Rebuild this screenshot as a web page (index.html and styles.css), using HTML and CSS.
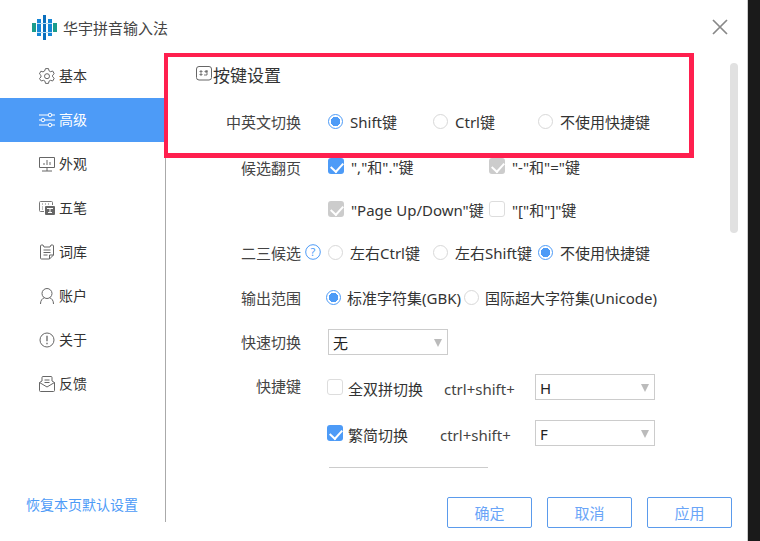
FILE: index.html
```html
<!DOCTYPE html>
<html lang="zh-CN">
<head>
<meta charset="utf-8">
<title>华宇拼音输入法</title>
<link rel="stylesheet" href="styles.css">
</head>
<body>
<div class="screen">
  <div class="window">
    <header class="titlebar">
      <svg class="logo" viewBox="0 0 25 25" width="25" height="25">
        <rect x="0" y="8" width="4" height="9" fill="#1a9c8c"/>
        <rect x="5" y="4" width="4" height="17" fill="#1586d6"/>
        <rect x="11" y="0" width="3" height="25" fill="#0a6fbd"/>
        <rect x="16" y="4" width="4" height="17" fill="#1586d6"/>
        <rect x="21" y="8" width="4" height="9" fill="#1a9c8c"/>
        <rect x="5" y="8" width="15" height="1" fill="#b8dcf2"/>
        <rect x="5" y="17" width="15" height="1" fill="#b8dcf2"/>
      </svg>
      <span class="app-name">华宇拼音输入法</span>
      <svg class="close" viewBox="0 0 16 16" width="16" height="16"><path d="M1 1 15 15M15 1 1 15" stroke="#888" stroke-width="1.7" fill="none"/></svg>
    </header>
    <div class="body">
      <aside class="sidebar">
        <nav class="menu">
          <a class="item"><svg class="ic" viewBox="0 0 16 16"><path d="M6.500 .6h3l.5 2.200 1.600.9 2.100-.7 1.500 2.700-1.600 1.500v1.600l1.600 1.500-1.500 2.700-2.100-.7-1.600.9-.5 2.200h-3l-.5-2.200-1.600-.9-2.100.7L.4 10.500 2 9V7.400L.4 5.900l1.500-2.700 2.100.7 1.600-.9z" fill="none" stroke="#666" stroke-width="1"/><circle cx="8" cy="8.200" r="2.500" fill="none" stroke="#666"/></svg>基本</a>
          <a class="item active"><svg class="ic" viewBox="0 0 16 16"><path d="M0 3h9M13 3h3M0 8h2M6 8h10M0 13h9M13 13h3" stroke="#fff" stroke-width="1" fill="none"/><circle cx="11" cy="3" r="1.800" fill="none" stroke="#fff"/><circle cx="4" cy="8" r="1.800" fill="none" stroke="#fff"/><circle cx="11" cy="13" r="1.800" fill="none" stroke="#fff"/></svg>高级</a>
          <a class="item"><svg class="ic" viewBox="0 0 16 16"><path d="M.5 1.500h15v10H.5zM3 15h10M8 11.500V15M5 9V7M8 9V4M11 9V6" fill="none" stroke="#666"/></svg>外观</a>
          <a class="item"><svg class="ic" viewBox="0 0 16 16"><path d="M5 11.500H1.500a1 1 0 0 1-1-1v-8a1 1 0 0 1 1-1h11a1 1 0 0 1 1 1V5" fill="none" stroke="#777"/><path d="M3 4h1M6 4h1M9 4h1M3 7h1M3 9h1" stroke="#777"/><rect x="6" y="6" width="10" height="9" rx="1" fill="#666"/><path d="M8 8.500h6M9 12.500h4M11 8.500v4" stroke="#fff"/></svg>五笔</a>
          <a class="item"><svg class="ic" viewBox="0 0 16 16"><path d="M4 1H2.500a1 1 0 0 0-1 1v12a1 1 0 0 0 1 1h8l4-4V2a1 1 0 0 0-1-1H12M4 1l1 2h6l1-2M10.500 15v-4h4M4.500 6h7M4.500 8.500h7M4.500 11h4" fill="none" stroke="#666"/></svg>词库</a>
          <a class="item"><svg class="ic" viewBox="0 0 16 16"><circle cx="8" cy="5.500" r="5" fill="none" stroke="#666"/><path d="M1.500 16c0-3.500 1.700-5.500 3.700-6.200M14.500 16c0-3.500-1.700-5.500-3.700-6.200" fill="none" stroke="#666"/></svg>账户</a>
          <a class="item"><svg class="ic" viewBox="0 0 16 16"><circle cx="8" cy="8" r="7" fill="none" stroke="#666"/><path d="M8 3.800v5.500M8 10.800v1.500" stroke="#666" stroke-width="1.300"/></svg>关于</a>
          <a class="item"><svg class="ic" viewBox="0 0 16 16"><path d="M.5 6.500v8a1 1 0 0 0 1 1h13a1 1 0 0 0 1-1v-8L13 5V1.500a1 1 0 0 0-1-1H4a1 1 0 0 0-1 1V5zM.5 6.500 8 11l7.500-4.500M5.500 4h5M5.500 6.500h5" fill="none" stroke="#666"/></svg>反馈</a>
        </nav>
        <a class="restore">恢复本页默认设置</a>
      </aside>
      <main class="main">
        <h2 class="section-title"><svg class="key-ic" viewBox="0 0 16 16" width="16" height="16"><rect x=".5" y=".5" width="15" height="13.500" rx="2.500" fill="none" stroke="#666"/><path d="M4 5h2v1H4zM9 5h2v1H9zM4 8h2v1H4zM11 4v5M8 9h3" stroke="#555" stroke-width=".8" fill="none"/></svg>按键设置</h2>

        <div class="row r-switch">
          <span class="label">中英文切换</span>
          <div class="opts grid105">
            <label class="opt"><i class="radio on"></i>Shift键</label>
            <label class="opt"><i class="radio"></i>Ctrl键</label>
            <label class="opt"><i class="radio"></i>不使用快捷键</label>
          </div>
        </div>

        <div class="row r-page">
          <span class="label">候选翻页</span>
          <div class="checks">
            <label class="opt"><i class="check on"></i>","和"."键</label>
            <label class="opt"><i class="check dis"></i>"-"和"="键</label>
            <label class="opt"><i class="check dis"></i>"Page Up/Down"键</label>
            <label class="opt"><i class="check"></i>"["和"]"键</label>
          </div>
        </div>

        <div class="row r-cand">
          <span class="label">二三候选<svg class="help" viewBox="0 0 16 16" width="16" height="16"><circle cx="8" cy="8" r="7.300" fill="none" stroke="#4d9bf7"/><text x="8" y="11.800" text-anchor="middle" class="help-q">?</text></svg></span>
          <div class="opts grid105">
            <label class="opt"><i class="radio"></i>左右Ctrl键</label>
            <label class="opt"><i class="radio"></i>左右Shift键</label>
            <label class="opt"><i class="radio on"></i>不使用快捷键</label>
          </div>
        </div>

        <div class="row r-range">
          <span class="label">输出范围</span>
          <div class="opts shifted">
            <label class="opt tight"><i class="radio on"></i>标准字符集(GBK)</label>
            <label class="opt tight"><i class="radio"></i>国际超大字符集(Unicode)</label>
          </div>
        </div>

        <div class="row r-quick">
          <span class="label">快速切换</span>
          <div class="select">无<b class="caret"></b></div>
        </div>

        <div class="row r-hot">
          <span class="label">快捷键</span>
          <div class="hot">
            <label class="opt w96"><i class="check"></i>全双拼切换</label>
            <span class="combo c1">ctrl+shift+</span>
            <div class="select">H<b class="caret"></b></div>
          </div>
        </div>

        <div class="row r-hot2">
          <span class="label"></span>
          <div class="hot">
            <label class="opt w92"><i class="check on"></i>繁简切换</label>
            <span class="combo c2">ctrl+shift+</span>
            <div class="select">F<b class="caret"></b></div>
          </div>
        </div>

        <hr class="rule">

        <footer class="actions">
          <button class="btn">确定</button>
          <button class="btn">取消</button>
          <button class="btn">应用</button>
        </footer>
        <div class="scrollbar"></div>
      </main>
    </div>
  </div>
  <div class="edge"></div>
  <div class="highlight"></div>
</div>
</body>
</html>
```

FILE: styles.css
```css
* { box-sizing: border-box; }
html, body { margin: 0; padding: 0; }
body {
  width: 760px; height: 541px; overflow: hidden; background: #fff;
  font-family: "Noto Sans", "Noto Sans CJK SC", sans-serif;
  font-size: 15px; line-height: 20px; color: #333;
}
.screen { position: relative; display: flex; width: 760px; height: 541px; }
.window { width: 747px; height: 541px; display: flex; flex-direction: column; background: #fff; }
.edge { width: 13px; background: #1a1a1a; border-left: 1px solid #ccc; }

.titlebar { height: 53px; display: flex; align-items: center; padding: 2px 19px 0 32px; }
.logo { flex: none; margin-right: 6px; margin-top: -1px; }
.app-name { font-size: 15px; color: #444; }
.close { margin-left: auto; margin-top: -2px; }

.body { display: flex; height: 469px; }
.sidebar { width: 166px; flex: none; border-right: 1px solid #aaa; display: flex; flex-direction: column; font-size: 14px; }
.menu { display: flex; flex-direction: column; margin-top: 1px; }
.item { height: 44px; display: flex; align-items: center; padding-left: 39px; color: #333; }
.item.active { background: #4d9bf7; color: #fff; width: 165px; }
.ic { width: 16px; height: 16px; margin-right: 4px; flex: none; }
.restore { margin-top: auto; margin-bottom: 7px; padding-left: 26px; color: #4d9bf7; }

.main { position: relative; flex: 1; display: flex; flex-direction: column; padding-top: 13px; }
.section-title { margin: 0 0 0 30px; height: 22px; display: flex; align-items: center; font-size: 17px; font-weight: 400; color: #333; }
.key-ic { margin-right: 1px; margin-top: -4px; }

.row { display: flex; align-items: center; }
.label { width: 135px; flex: none; text-align: right; color: #444; }
.r-cand .label { position: relative; }
.opts { margin-left: 27px; }
.grid105 { display: grid; grid-template-columns: 105px 105px 1fr; }
.shifted { display: flex; gap: 3px; margin-left: 25px; }
.opt { display: flex; align-items: center; color: #333; white-space: nowrap; }

.radio { width: 15px; height: 15px; flex: none; margin-right: 7px; margin-top: -2px; border-radius: 50%; border: 1px solid #d8d8d8; background: #fff; }
.radio.on { border-color: #4d9bf7; background: radial-gradient(circle, #4d9bf7 0 4.500px, #fff 5px); }
.tight .radio { margin-right: 6px; }
.check { position: relative; width: 16px; height: 16px; flex: none; margin-right: 7px; border-radius: 3px; border: 1px solid #ddd; background: #fff; }
.check.on, .check.dis { border: 0; background: #4d9bf7; }
.check.dis { background: #ccc; }
.check.on::after, .check.dis::after {
  content: ""; position: absolute; left: 5px; top: 2px; width: 6px; height: 10px;
  border: solid #fff; border-width: 0 2px 2px 0; transform: rotate(42deg);
}

.r-switch { height: 20px; margin-top: 26px; }
.r-page { margin-top: 25px; align-items: flex-start; }
.r-page .label { margin-top: 1px; }
.checks { margin-left: 27px; display: grid; grid-template-columns: 161px 1fr; row-gap: 23px; }
.checks .opt { height: 20px; }
.checks .check { margin-top: -3px; }
.r-cand { margin-top: 23px; height: 20px; }
.help { position: absolute; right: -20px; top: 1px; }
.help-q { font-size: 11px; fill: #4d9bf7; font-family: "Noto Sans", sans-serif; }
.r-range { margin-top: 25px; height: 20px; }
.r-quick { margin-top: 21px; height: 26px; }
.select { position: relative; width: 120px; height: 26px; border: 1px solid #ccc; background: #fff; padding: 3px 4px; color: #222; margin-left: 27px; }
.caret { position: absolute; right: 5px; top: 9px; border: solid transparent; border-width: 8px 4px 0; border-top-color: #bbb; }
.r-hot { margin-top: 19px; height: 26px; align-items: flex-start; }
.r-hot .label { margin-top: 2px; }
.r-hot2 { margin-top: 20px; height: 26px; align-items: flex-start; }
.hot { display: flex; margin-left: 26px; align-items: center; height: 26px; }
.hot .select { margin-left: 0; }
.hot .opt, .combo { margin-top: 4px; }
.hot .check { margin-right: 5px; margin-top: -4px; }
.w96 { width: 117px; }
.w92 { width: 113px; }
.combo { color: #444; }
.c1 { width: 91px; }
.c2 { width: 95px; }
.rule { width: 159px; height: 1px; margin: 21px 0 0 163px; border: 0; background: #ccc; flex: none; }

.actions { display: flex; gap: 15px; margin-top: 29px; margin-left: 281px; }
.btn { width: 85px; height: 31px; padding: 0; background: #fff; border: 1px solid #5b9bec; border-radius: 2px; color: #6aa5f8; font: inherit; }
.scrollbar { position: absolute; right: 9px; top: 10px; width: 8px; height: 170px; background: #e1e1e1; border-radius: 4px; }

.highlight { position: absolute; left: 164px; top: 53px; width: 530px; height: 105px; border: 5px solid #ff1f4e; border-width: 4px 5px 5px 4px; pointer-events: none; }
```
